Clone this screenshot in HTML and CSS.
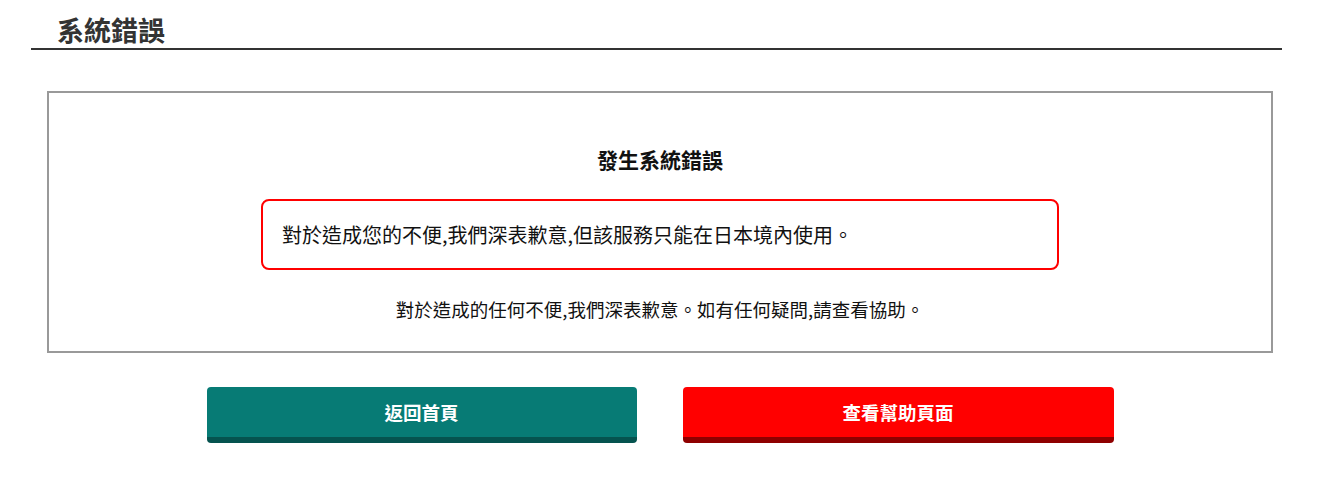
FILE: index.html
```html
<!DOCTYPE html>
<html lang="zh-Hant">
<head>
<meta charset="utf-8">
<title>系統錯誤</title>
<link rel="stylesheet" href="styles.css">
</head>
<body>
<header class="page-header">
  <h1 class="page-title">系統錯誤</h1>
</header>
<main class="page">
  <section class="error-box">
    <h2 class="error-heading">發生系統錯誤</h2>
    <div class="error-alert">對於造成您的不便,我們深表歉意,但該服務只能在日本境內使用。</div>
    <p class="error-note">對於造成的任何不便,我們深表歉意。如有任何疑問,請查看協助。</p>
  </section>
  <div class="actions">
    <a class="btn btn-home" href="#">返回首頁</a>
    <a class="btn btn-help" href="#">查看幫助頁面</a>
  </div>
</main>
</body>
</html>
```
FILE: styles.css
```css
* { box-sizing: border-box; }
html, body { margin: 0; padding: 0; background: #fff; }
body {
  font-family: "Noto Sans CJK TC", "Noto Sans", sans-serif;
  color: #111;
}
.page-header {
  margin: 0 35px 0 31px;
  padding: 12px 0 0 26px;
  border-bottom: 2px solid #333;
}
.page-title {
  margin: 0;
  font-size: 27px;
  font-weight: 700;
  line-height: 36px;
  color: #333;
}
.page {
  margin: 0 44px 0 47px;
}
.error-box {
  margin-top: 41px;
  border: 2px solid #999;
  padding: 51px 0 28px;
  display: flex;
  flex-direction: column;
  align-items: center;
}
.error-heading {
  margin: 0;
  font-size: 21px;
  font-weight: 700;
  line-height: 30px;
  color: #111;
}
.error-alert {
  margin-top: 25px;
  width: 798px;
  border: 2px solid #ff0000;
  border-radius: 8px;
  padding: 18px 19px;
  font-size: 20px;
  line-height: 31px;
  color: #111;
}
.error-note {
  margin: 25px 0 0;
  font-size: 18.5px;
  line-height: 28px;
  color: #111;
}
.actions {
  margin-top: 34px;
  display: flex;
  justify-content: center;
  gap: 46px;
}
.btn {
  display: flex;
  align-items: center;
  justify-content: center;
  width: 430px;
  height: 56px;
  padding-bottom: 0;
  border-radius: 4px;
  border-bottom: 6px solid transparent;
  color: #fff;
  font-size: 18.5px;
  font-weight: 700;
  text-decoration: none;
}
.btn-home {
  background: #077b75;
  border-bottom-color: #05534f;
}
.btn-help {
  width: 431px;
  background: #ff0000;
  border-bottom-color: #8e0000;
}
```
